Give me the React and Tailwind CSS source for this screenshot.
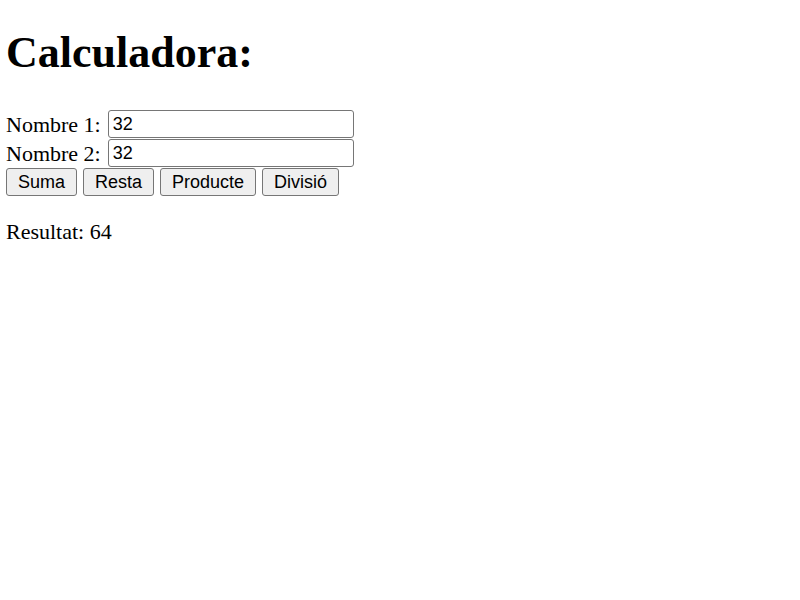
export default function App() {
  return (
    <div className="min-h-[600px] bg-white px-[6px] pt-[28px] text-black font-['Liberation_Serif','Times_New_Roman',serif] text-[22px] leading-[25px]">
      <h1 className="text-[44px] leading-[50px] font-bold">Calculadora:</h1>

      <div className="mt-[32px] flex flex-col gap-[1px]">
        <div className="flex items-center gap-[7px]">
          <span>Nombre 1:</span>
          <input
            defaultValue="32"
            className="w-[246px] h-[28px] rounded-[3px] border border-[#767676] px-[4px] font-['Liberation_Sans',Arial,sans-serif] text-[18px] outline-none"
          />
        </div>
        <div className="flex items-center gap-[7px]">
          <span>Nombre 2:</span>
          <input
            defaultValue="32"
            className="w-[246px] h-[28px] rounded-[3px] border border-[#767676] px-[4px] font-['Liberation_Sans',Arial,sans-serif] text-[18px] outline-none"
          />
        </div>
        <div className="flex gap-[6px]">
          {['Suma', 'Resta', 'Producte', 'Divisió'].map((label) => (
            <button
              key={label}
              className="h-[28px] px-[11px] rounded-[3px] border border-[#767676] bg-[#efefef] font-['Liberation_Sans',Arial,sans-serif] text-[18px] leading-none text-black"
            >
              {label}
            </button>
          ))}
        </div>
      </div>

      <p className="mt-[23px]">Resultat: 64</p>
    </div>
  )
}
